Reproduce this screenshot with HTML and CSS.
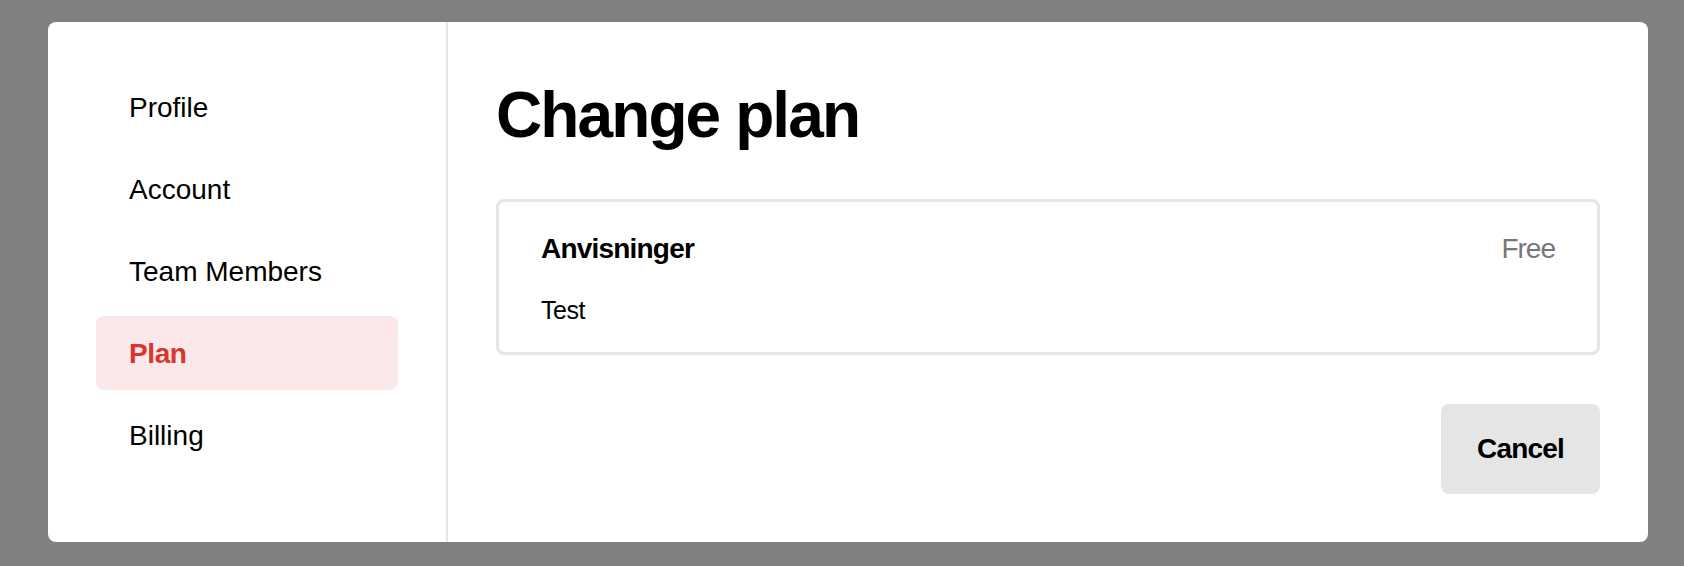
FILE: index.html
```html
<!DOCTYPE html>
<html lang="en">
<head>
<meta charset="utf-8">
<title>Change plan</title>
<link rel="stylesheet" href="styles.css">
</head>
<body>
  <div class="modal">
    <nav class="sidebar">
      <a class="nav-item">Profile</a>
      <a class="nav-item">Account</a>
      <a class="nav-item">Team Members</a>
      <a class="nav-item active">Plan</a>
      <a class="nav-item">Billing</a>
    </nav>
    <main class="content">
      <h1 class="title">Change plan</h1>
      <div class="plan-card">
        <div class="plan-row">
          <span class="plan-name">Anvisninger</span>
          <span class="plan-price">Free</span>
        </div>
        <div class="plan-desc">Test</div>
      </div>
      <div class="actions">
        <button class="btn-cancel">Cancel</button>
      </div>
    </main>
  </div>
</body>
</html>
```
FILE: styles.css
```css
* { box-sizing: border-box; }
html, body { margin: 0; height: 100%; }
body {
  background: #808080;
  padding: 22px 0 0 48px;
  font-family: "Liberation Sans", Arial, sans-serif;
  color: #000;
}
.modal {
  width: 1600px;
  background: #fff;
  border-radius: 8px;
  display: flex;
}
.sidebar {
  width: 400px;
  flex: none;
  padding: 48px 48px;
  border-right: 2px solid #e6e6e6;
  display: flex;
  flex-direction: column;
  gap: 8px;
}
.nav-item {
  display: block;
  height: 74px;
  padding: 17px 33px 15px;
  font-size: 28px;
  line-height: 42px;
  letter-spacing: 0;
  border-radius: 8px;
  color: #000;
}
.nav-item.active {
  background: #fbe9e9;
  color: #d7372d;
  font-weight: bold;
  letter-spacing: -0.4px;
}
.content {
  flex: 1;
  padding: 48px 48px 48px 48px;
  display: flex;
  flex-direction: column;
}
.title {
  margin: 5px 0 44px;
  font-size: 64px;
  line-height: 80px;
  font-weight: bold;
  letter-spacing: -1.9px;
}
.plan-card {
  border: 3px solid #e6e6e6;
  border-radius: 8px;
  padding: 26px 42px 24px;
}
.plan-row {
  display: flex;
  justify-content: space-between;
  align-items: baseline;
  font-size: 28px;
  line-height: 42px;
}
.plan-name {
  font-weight: bold;
  letter-spacing: -0.8px;
}
.plan-price {
  color: #767676;
  letter-spacing: -1px;
}
.plan-desc {
  margin-top: 22px;
  font-size: 25px;
  line-height: 36px;
  letter-spacing: -0.5px;
}
.actions {
  display: flex;
  justify-content: flex-end;
  margin-top: 49px;
}
.btn-cancel {
  font-family: inherit;
  font-size: 28px;
  line-height: 42px;
  font-weight: bold;
  letter-spacing: -0.8px;
  color: #000;
  background: #e5e5e5;
  border: 0;
  border-radius: 8px;
  padding: 24px 36px;
  height: 90px;
}
```
